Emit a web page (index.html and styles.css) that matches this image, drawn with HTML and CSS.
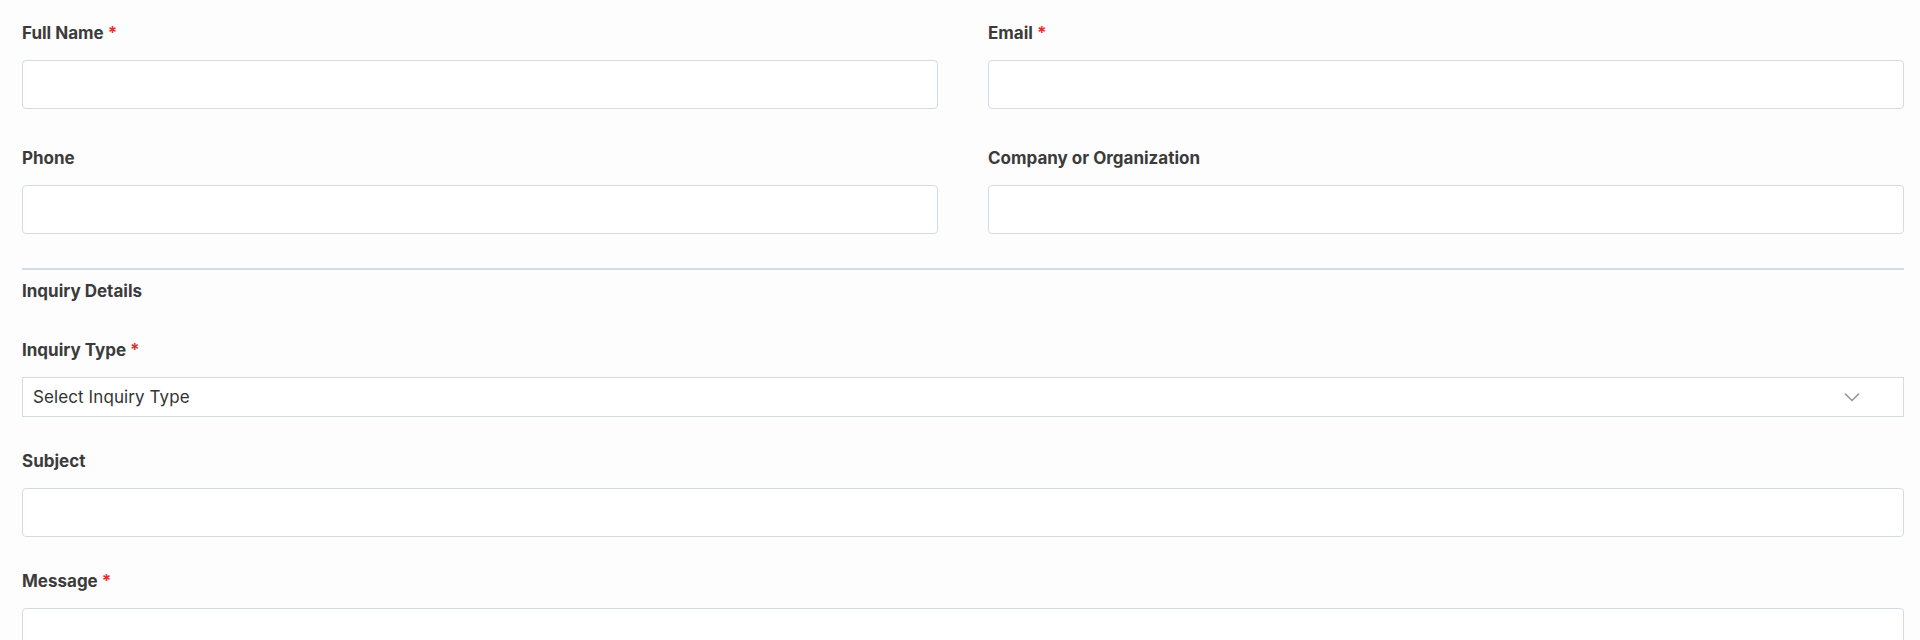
FILE: index.html
```html
<!DOCTYPE html>
<html>
<head>
  <link rel="stylesheet" href="styles.css">
</head>
<body>

<form class="inquiry-form" id="inquiry-form">
  <div class="form-row">
    <div class="form-group">
      <label for="full-name">Full Name <span class="required">*</span></label>
      <input type="text" id="full-name">
    </div>
    <div class="form-group">
      <label for="email">Email <span class="required">*</span></label>
      <input type="email" id="email">
    </div>
  </div>

  <div class="form-row">
    <div class="form-group">
      <label for="phone">Phone</label>
      <input type="tel" id="phone">
    </div>
    <div class="form-group">
      <label for="company">Company or Organization</label>
      <input type="text" id="company">
    </div>
  </div>

  <div class="section">
    <h3 class="section-title">Inquiry Details</h3>

    <div class="form-group">
      <label for="inquiry-type">Inquiry Type <span class="required">*</span></label>
      <div class="select-wrap">
        <select id="inquiry-type">
          <option value="">Select Inquiry Type</option>
          <option value="general">General</option>
          <option value="support">Support</option>
          <option value="sales">Sales</option>
          <option value="partnership">Partnership</option>
        </select>
        <svg class="chevron" width="16" height="9" viewBox="0 0 16 9">
          <path d="M1.5 1.2 L8 7.5 L14.5 1.2" fill="none" stroke="#9a9a9a" stroke-width="1.7" stroke-linecap="round" stroke-linejoin="round"/>
        </svg>
      </div>
    </div>

    <div class="form-group">
      <label for="subject">Subject</label>
      <input type="text" id="subject">
    </div>

    <div class="form-group">
      <label for="message">Message <span class="required">*</span></label>
      <textarea id="message" rows="6"></textarea>
    </div>
  </div>
</form>

</body>
</html>
```

FILE: styles.css
```css
body {
  font-family: Inter, Lato, "Noto Sans", sans-serif;
  background-color: #fdfdfd;
  color: #3b3b3b;
  margin: 0;
  padding: 23px 16px 0 22px;
}

.form-row {
  display: grid;
  grid-template-columns: 1fr 1fr;
  column-gap: 50px;
}

.form-row .form-group {
  margin-bottom: 39px;
}

label {
  display: block;
  font-size: 17px;
  font-weight: bold;
  line-height: 20px;
  margin-bottom: 17px;
}

.required {
  color: #e03131;
}

input[type="text"],
input[type="email"],
input[type="tel"],
textarea {
  display: block;
  box-sizing: border-box;
  width: 100%;
  height: 49px;
  padding: 10px;
  background-color: #fff;
  border: 1px solid #d3dbe5;
  border-radius: 4px;
  font-family: inherit;
  font-size: 17px;
  color: #333;
}

textarea {
  height: 160px;
  resize: vertical;
}

.section {
  border-top: 2px solid #d3dbe5;
  margin-top: -5px;
}

.section .form-group {
  margin-bottom: 34px;
}

.section-title {
  font-size: 17px;
  font-weight: bold;
  line-height: 20px;
  margin: 11px 0 39px;
}

.select-wrap {
  position: relative;
}

select {
  display: block;
  box-sizing: border-box;
  width: 100%;
  height: 40px;
  padding: 0 10px;
  background-color: #fff;
  border: 1px solid #d3dbe5;
  border-radius: 0;
  font-family: inherit;
  font-size: 17px;
  letter-spacing: 0.1px;
  color: #333;
  appearance: none;
  -webkit-appearance: none;
}

.chevron {
  position: absolute;
  right: 44px;
  top: 16px;
  pointer-events: none;
}
```
